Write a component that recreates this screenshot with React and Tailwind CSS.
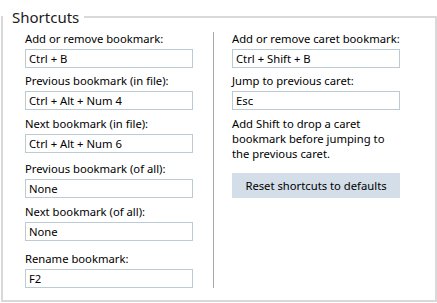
import React from "react"

const leftFields = [
  { label: "Add or remove bookmark:", value: "Ctrl + B", gap: "mt-0" },
  { label: "Previous bookmark (in file):", value: "Ctrl + Alt + Num 4", gap: "mt-[5px]" },
  { label: "Next bookmark (in file):", value: "Ctrl + Alt + Num 6", gap: "mt-[6px]" },
  { label: "Previous bookmark (of all):", value: "None", gap: "mt-[8px]" },
  { label: "Next bookmark (of all):", value: "None", gap: "mt-[6px]" },
  { label: "Rename bookmark:", value: "F2", gap: "mt-[10px]" },
]

const rightFields = [
  { label: "Add or remove caret bookmark:", value: "Ctrl + Shift + B", gap: "mt-0" },
  { label: "Jump to previous caret:", value: "Esc", gap: "mt-[5px]" },
]

const Field = ({ label, value, gap }) => (
  <div className={gap}>
    <div className="leading-[15px] h-[15px] whitespace-nowrap">{label}</div>
    <div className="mt-[3px] h-[19px] border border-[#bccad3] bg-white pl-[3px] leading-[17px] whitespace-nowrap">
      {value}
    </div>
  </div>
)

export default function App() {
  return (
    <div className="w-[437px] h-[303px] bg-white pt-[16px] pl-[1px] font-['Noto_Sans',sans-serif] text-[11.25px] text-black">
      <div className="relative w-[436px] h-[286px] border-2 border-[#d9d9d9]">
        <div className="absolute top-[-11px] left-0 bg-white pl-[9px] pr-[5px] text-[15px] leading-[20px] text-[#1b1b1b]">
          Shortcuts
        </div>

        <div className="flex items-start pl-[22px]">
          <div className="w-[168px] pt-[13px]">
            {leftFields.map((f) => (
              <Field key={f.label} {...f} />
            ))}
          </div>

          <div className="ml-[20px] mt-[14px] w-px h-[256px] bg-[#a8a8a8]" />

          <div className="ml-[18px] w-[168px] pt-[13px]">
            {rightFields.map((f) => (
              <Field key={f.label} {...f} />
            ))}
            <p className="mt-[6px] leading-[15px]">
              Add Shift to drop a caret
              <br />
              bookmark before jumping to
              <br />
              the previous caret.
            </p>
            <button className="mt-[12px] w-[168px] h-[25px] bg-[#d4dee8] text-center leading-[25px]">
              Reset shortcuts to defaults
            </button>
          </div>
        </div>
      </div>
    </div>
  )
}
